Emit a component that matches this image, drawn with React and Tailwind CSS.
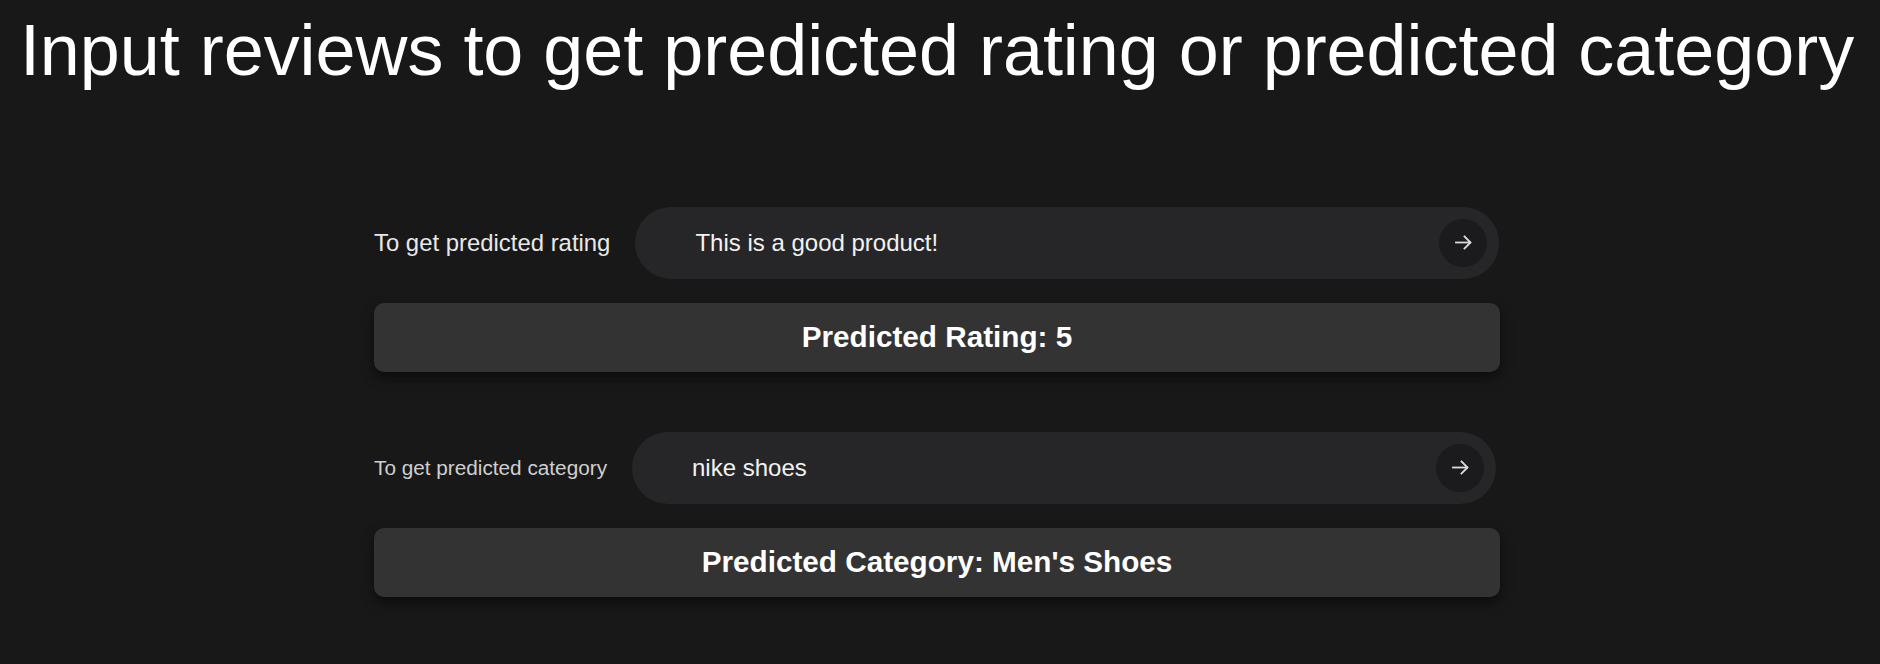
import { useState } from "react";

function ArrowIcon() {
  return (
    <svg width="17" height="15" viewBox="0 0 17 15" fill="none" stroke="currentColor" strokeWidth="1.8" strokeLinecap="square">
      <path d="M1 7.5h14" />
      <path d="M9.5 1.5l6 6-6 6" />
    </svg>
  );
}

function PredictRow({ label, labelClass, value, onChange, result }) {
  return (
    <div>
      <div className="flex items-center gap-[25px]">
        <label className={labelClass}>{label}</label>
        <div className="flex h-[72px] w-[864px] items-center rounded-full bg-[#262628] pl-[60px] pr-[12px]">
          <input
            value={value}
            onChange={(e) => onChange(e.target.value)}
            className="min-w-0 flex-1 bg-transparent text-[24px] text-[#f2f2f2] outline-none"
          />
          <button
            type="button"
            className="flex h-[48px] w-[48px] items-center justify-center rounded-full bg-[#1b1b1d] text-[#dcdcdc]"
          >
            <ArrowIcon />
          </button>
        </div>
      </div>
      <div className="mt-[24px] flex h-[69px] w-[1126px] items-center justify-center rounded-[10px] bg-[#333333] shadow-[0_6px_12px_rgba(0,0,0,0.5)]">
        <span className="text-[29.7px] font-bold text-white">{result}</span>
      </div>
    </div>
  );
}

export default function App() {
  const [review, setReview] = useState("This is a good product!");
  const [product, setProduct] = useState("nike shoes");

  return (
    <div className="min-h-screen bg-[#181818] pr-[6px] font-['Liberation_Sans',Arial,sans-serif] text-white">
      <h1 className="pt-[15px] text-center text-[71.9px] leading-none font-normal">
        Input reviews to get predicted rating or predicted category
      </h1>
      <div className="mx-auto mt-[120px] w-[1126px] pb-[60px]">
        <PredictRow
          label="To get predicted rating"
          labelClass="text-[23.9px] text-[#e8e8e8]"
          value={review}
          onChange={setReview}
          result="Predicted Rating: 5"
        />
        <div className="mt-[60px]">
          <PredictRow
            label="To get predicted category"
            labelClass="text-[20.75px] text-[#cfcfcf]"
            value={product}
            onChange={setProduct}
            result="Predicted Category: Men's Shoes"
          />
        </div>
      </div>
    </div>
  );
}
